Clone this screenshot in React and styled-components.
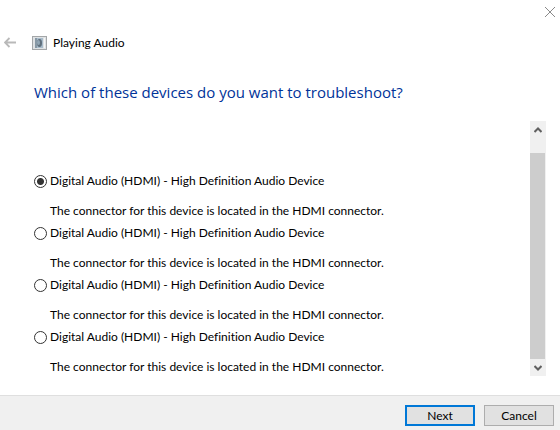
import React, { useState } from "react";
import styled, { createGlobalStyle } from "styled-components";

const devices = [
  {
    id: "hdmi-1",
    name: "Digital Audio (HDMI) - High Definition Audio Device",
    description: "The connector for this device is located in the HDMI connector.",
  },
  {
    id: "hdmi-2",
    name: "Digital Audio (HDMI) - High Definition Audio Device",
    description: "The connector for this device is located in the HDMI connector.",
  },
  {
    id: "hdmi-3",
    name: "Digital Audio (HDMI) - High Definition Audio Device",
    description: "The connector for this device is located in the HDMI connector.",
  },
  {
    id: "hdmi-4",
    name: "Digital Audio (HDMI) - High Definition Audio Device",
    description: "The connector for this device is located in the HDMI connector.",
  },
];

export default function App() {
  const [selected, setSelected] = useState("hdmi-1");

  return (
    <>
      <GlobalStyle />
      <Wizard>
        <TitleBar>
          <IconButton aria-label="Close">
            <svg width="10" height="10" viewBox="0 0 10 10">
              <path d="M0 0L10 10M10 0L0 10" stroke="#8a8a8a" fill="none" />
            </svg>
          </IconButton>
        </TitleBar>
        <Header>
          <IconButton aria-label="Back">
            <svg width="12" height="12" viewBox="0 0 12 12">
              <path d="M5.5 1L1 5.5L5.5 10M1 5.5H12" stroke="#b9b9b9" strokeWidth="1.8" fill="none" />
            </svg>
          </IconButton>
          <AudioIcon />
          <AppName>Playing Audio</AppName>
        </Header>
        <Question id="question">Which of these devices do you want to troubleshoot?</Question>
        <Content>
          <DeviceList role="radiogroup" aria-labelledby="question">
            {devices.map(({ id, name, description }) => (
              <Device key={id}>
                <Radio
                  type="radio"
                  name="device"
                  id={id}
                  checked={selected === id}
                  onChange={() => setSelected(id)}
                  aria-describedby={`${id}-info`}
                />
                <DeviceName htmlFor={id}>{name}</DeviceName>
                <Description id={`${id}-info`}>{description}</Description>
              </Device>
            ))}
          </DeviceList>
          <ScrollBar>
            <ScrollButton aria-label="Scroll up">
              <svg width="8" height="6" viewBox="0 0 8 6">
                <path d="M0.5 5L4 1.5L7.5 5" stroke="#606060" strokeWidth="2" fill="none" />
              </svg>
            </ScrollButton>
            <Thumb />
            <ScrollButton aria-label="Scroll down">
              <svg width="8" height="6" viewBox="0 0 8 6">
                <path d="M0.5 1L4 4.5L7.5 1" stroke="#606060" strokeWidth="2" fill="none" />
              </svg>
            </ScrollButton>
          </ScrollBar>
        </Content>
        <Footer>
          <Button $primary>Next</Button>
          <Button>Cancel</Button>
        </Footer>
      </Wizard>
    </>
  );
}

function AudioIcon() {
  return (
    <svg width="15" height="14" viewBox="0 0 15 14" aria-hidden="true">
      <rect x="0.5" y="0.5" width="14" height="13" fill="#dfe2e4" stroke="#a3a6a8" />
      <rect x="3" y="2" width="8" height="10" fill="#a9bccb" />
      <rect x="3" y="2" width="2" height="10" fill="#8798a5" />
      <ellipse cx="7.5" cy="7" rx="2.5" ry="4" fill="#5f6f7c" />
      <ellipse cx="6.5" cy="6.5" rx="1.5" ry="2.5" fill="#92a6b5" />
      <path d="M12.5 2V12" stroke="#f4f6f7" />
    </svg>
  );
}

const GlobalStyle = createGlobalStyle`
  * {
    box-sizing: border-box;
  }
  body {
    margin: 0;
    background: #ffffff;
    color: #000000;
    font-family: Lato, "Open Sans", sans-serif;
    font-size: 12px;
    line-height: 16px;
    font-variant-ligatures: none;
  }
  button {
    font: inherit;
    color: inherit;
  }
`;

const Wizard = styled.main`
  display: flex;
  flex-direction: column;
  min-height: 100vh;
`;

const TitleBar = styled.div`
  display: flex;
  justify-content: flex-end;
  padding: 7px 5px 0 0;
`;

const IconButton = styled.button`
  display: flex;
  padding: 0;
  border: 0;
  background: none;
`;

const Header = styled.header`
  display: flex;
  align-items: center;
  padding: 18px 4px 0;
  svg {
    flex: none;
  }
  ${IconButton} {
    margin-right: 16px;
  }
`;

const AppName = styled.span`
  margin-left: 6px;
`;

const Question = styled.h1`
  margin: 29px 34px 17px;
  color: #003399;
  font-family: "Open Sans", "Noto Sans", sans-serif;
  font-size: 15px;
  font-weight: 400;
  line-height: 24px;
`;

const Content = styled.div`
  display: flex;
  flex: 1;
  padding: 0 14px 19px 34px;
`;

const DeviceList = styled.div`
  flex: 1;
  padding-top: 52px;
`;

const Device = styled.div`
  display: grid;
  grid-template-columns: 13px 1fr;
  column-gap: 3px;
  row-gap: 14px;
  align-items: center;
  margin-bottom: 6px;
  &:last-child {
    margin-bottom: 0;
  }
`;

const Radio = styled.input`
  appearance: none;
  width: 13px;
  height: 13px;
  margin: 0;
  border: 1px solid #333333;
  border-radius: 50%;
  background: #ffffff;
  &:checked {
    background: radial-gradient(circle, #333333 3px, #ffffff 4px);
  }
`;

const DeviceName = styled.label`
  justify-self: start;
`;

const Description = styled.p`
  grid-column: 2;
  margin: 0;
`;

const ScrollBar = styled.div`
  display: flex;
  flex-direction: column;
  width: 16px;
  background: #f0f0f0;
`;

const ScrollButton = styled.button`
  display: flex;
  align-items: center;
  justify-content: center;
  height: 17px;
  padding: 0;
  border: 0;
  background: #f0f0f0;
`;

const Thumb = styled.div`
  flex: 1;
  margin: 15px 1px 0 0;
  background: #cdcdcd;
`;

const Footer = styled.footer`
  display: flex;
  justify-content: flex-end;
  gap: 9px;
  padding: 9px 6px 4px;
  border-top: 1px solid #dfdfdf;
  background: #f0f0f0;
`;

const Button = styled.button`
  width: 70px;
  height: 21px;
  padding: 0;
  border: ${({ $primary }) => ($primary ? "2px solid #0078d7" : "1px solid #adadad")};
  background: #e1e1e1;
  line-height: 16px;
`;
